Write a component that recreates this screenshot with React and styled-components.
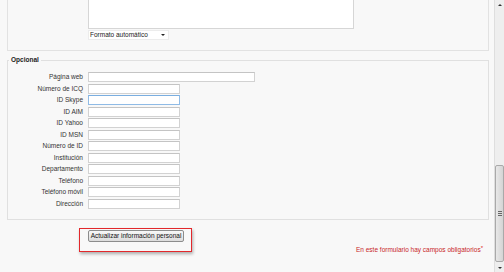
import React from "react";
import styled, { createGlobalStyle } from "styled-components";

const GlobalStyle = createGlobalStyle`
  html, body { margin: 0; padding: 0; }
  body {
    background: #f8f8f8;
    font-family: "Liberation Sans", Arial, sans-serif;
    overflow: hidden;
  }
`;

const Page = styled.div`
  display: flex;
  width: 504px;
  height: 272px;
  background: #f8f8f8;
`;

const Main = styled.div`
  flex: 1;
  display: flex;
  flex-direction: column;
  padding: 0 5px 0 7px;
  min-width: 0;
`;

const TopBox = styled.div`
  border: 1px solid #e2e2e2;
  border-top: none;
  padding: 0 0 10px 80px;
  display: flex;
  flex-direction: column;
  align-items: flex-start;
`;

const Editor = styled.div`
  width: 266px;
  height: 29px;
  box-sizing: border-box;
  background: #fff;
  border: 1px solid #d6d6d6;
  border-top: none;
`;

const Select = styled.div`
  margin-top: 1px;
  width: 81px;
  height: 10px;
  box-sizing: border-box;
  background: #fff;
  border: 1px solid #ececec;
  display: flex;
  align-items: center;
  justify-content: space-between;
  padding: 0 3px 0 1px;
  font-size: 6.5px;
  line-height: 8px;
  color: #222;
`;

const Caret = styled.span`
  width: 0;
  height: 0;
  border-left: 2px solid transparent;
  border-right: 2px solid transparent;
  border-top: 2px solid #222;
`;

const Fieldset = styled.fieldset`
  margin: 4px 0 0 0;
  padding: 7px 0 10px 0;
  border: 1px solid #e0e0e0;
  min-width: 0;
`;

const Legend = styled.legend`
  margin-left: 1px;
  padding: 0 2px;
  font-size: 6.5px;
  line-height: 10px;
  font-weight: bold;
  color: #222;
`;

const Grid = styled.div`
  display: grid;
  grid-template-columns: 75px auto;
  grid-auto-rows: 10px;
  column-gap: 5px;
  row-gap: 1.55px;
  align-items: center;
  justify-items: start;
`;

const Label = styled.label`
  justify-self: end;
  font-size: 6.5px;
  line-height: 10px;
  color: #333;
  white-space: nowrap;
`;

const Input = styled.div`
  width: ${(p) => (p.$wide ? "167px" : "92px")};
  height: 10px;
  box-sizing: border-box;
  background: #fff;
  border: 1px solid ${(p) => (p.$focus ? "#8fbbe6" : "#d2d2d2")};
  border-top-color: ${(p) => (p.$focus ? "#7aaee0" : "#c4c4c4")};
`;

const Bottom = styled.div`
  display: flex;
  justify-content: space-between;
  align-items: flex-start;
  margin-top: 8px;
`;

const Frame = styled.div`
  margin-left: 72px;
  padding: 1px 7px 9px 8px;
  border: 1px solid #e2282c;
  box-shadow: 1px 2px 3px rgba(0, 0, 0, 0.3);
  display: flex;
`;

const Button = styled.button`
  width: 96px;
  height: 12px;
  padding: 0;
  box-sizing: border-box;
  border: 1px solid #8c8c8c;
  border-radius: 2px;
  background: linear-gradient(#f8f8f8, #dcdcdc);
  font-family: "Liberation Sans", Arial, sans-serif;
  font-size: 6.5px;
  line-height: 10px;
  color: #111;
  white-space: nowrap;
`;

const Note = styled.div`
  padding: 15px 6px 0 0;
  font-size: 6.5px;
  line-height: 10px;
  color: #c8262a;
  white-space: nowrap;
`;

const Star = styled.span`
  color: #e02020;
  font-size: 6px;
  vertical-align: 2px;
`;

const Scrollbar = styled.div`
  width: 9px;
  display: flex;
  flex-direction: column;
  background: #eeeeee;
  border-left: 1px solid #dedede;
`;

const Arrow = styled.div`
  height: 9px;
  display: flex;
  align-items: center;
  justify-content: center;
  &::after {
    content: "";
    width: 0;
    height: 0;
    border-left: 2px solid transparent;
    border-right: 2px solid transparent;
    ${(p) =>
      p.$up ? "border-bottom: 2px solid #333;" : "border-top: 2px solid #333;"}
  }
`;

const Track = styled.div`
  flex: 1;
`;

const Thumb = styled.div`
  height: 97px;
  box-sizing: border-box;
  margin: 0 0 1px 0;
  border: 1px solid #a9a9a9;
  border-radius: 2px;
  background: linear-gradient(to right, #e8e8e8, #d4d4d4);
  display: flex;
  align-items: center;
  justify-content: center;
`;

const Grip = styled.div`
  width: 4px;
  height: 5px;
  background: repeating-linear-gradient(
    to bottom,
    #666 0,
    #666 1px,
    transparent 1px,
    transparent 2px
  );
`;

const fields = [
  { label: "Página web", wide: true },
  { label: "Número de ICQ" },
  { label: "ID Skype", focus: true },
  { label: "ID AIM" },
  { label: "ID Yahoo" },
  { label: "ID MSN" },
  { label: "Número de ID" },
  { label: "Institución" },
  { label: "Departamento" },
  { label: "Teléfono" },
  { label: "Teléfono móvil" },
  { label: "Dirección" },
];

export default function App() {
  return (
    <>
      <GlobalStyle />
      <Page>
        <Main>
          <TopBox>
            <Editor />
            <Select>
              <span>Formato automático</span>
              <Caret />
            </Select>
          </TopBox>
          <Fieldset>
            <Legend>Opcional</Legend>
            <Grid>
              {fields.map((f) => (
                <React.Fragment key={f.label}>
                  <Label>{f.label}</Label>
                  <Input $wide={f.wide} $focus={f.focus} />
                </React.Fragment>
              ))}
            </Grid>
          </Fieldset>
          <Bottom>
            <Frame>
              <Button>Actualizar información personal</Button>
            </Frame>
            <Note>
              En este formulario hay campos obligatorios<Star>*</Star>
            </Note>
          </Bottom>
        </Main>
        <Scrollbar>
          <Arrow $up />
          <Track />
          <Thumb>
            <Grip />
          </Thumb>
          <Arrow />
        </Scrollbar>
      </Page>
    </>
  );
}
